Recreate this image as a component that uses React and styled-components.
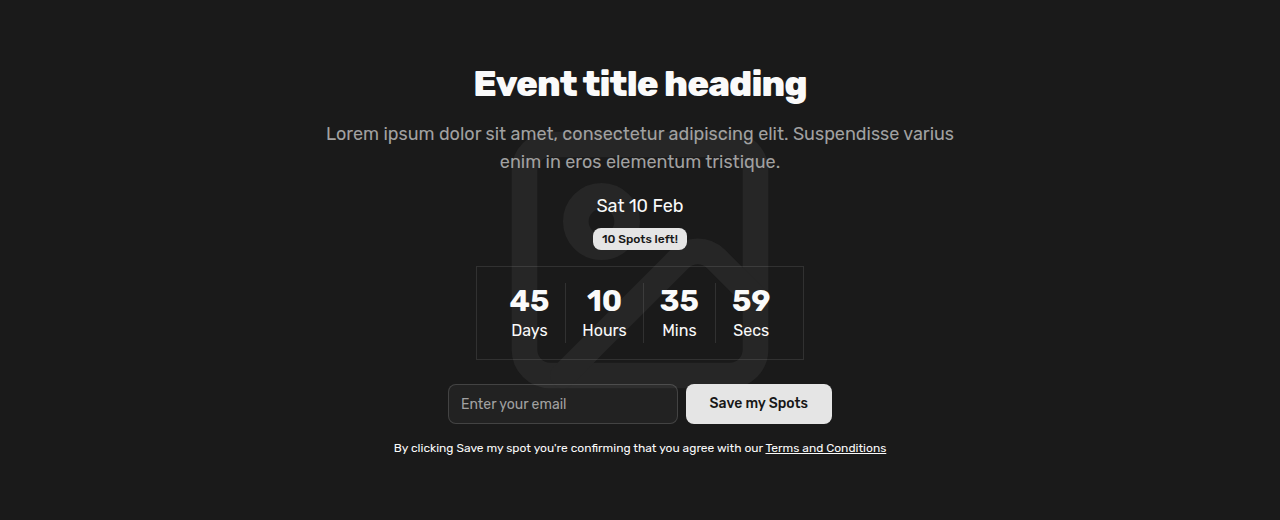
import React from "react";
import styled, { createGlobalStyle } from "styled-components";
import { Image } from "lucide-react";

const GlobalStyle = createGlobalStyle`
  *, *::before, *::after { box-sizing: border-box; }
  body {
    margin: 0;
    background: #1a1a1a;
    color: #fafafa;
    font-family: Rubik, Roboto, "Liberation Sans", sans-serif;
  }
  h1, p { margin: 0; }
`;

const Hero = styled.section`
  position: relative;
  min-height: 100vh;
  padding: 64px 24px;
  display: flex;
  flex-direction: column;
  align-items: center;
  justify-content: center;
  text-align: center;
  background: #1a1a1a;
`;

const Backdrop = styled.div`
  position: absolute;
  inset: 0;
  display: flex;
  align-items: center;
  justify-content: center;
  color: #262626;
  pointer-events: none;
`;

const Content = styled.div`
  position: relative;
  width: 100%;
  max-width: 672px;
  display: flex;
  flex-direction: column;
  align-items: center;
  gap: 16px;
`;

const Title = styled.h1`
  font-size: 36px;
  line-height: 40px;
  font-weight: 800;
  letter-spacing: -0.025em;
`;

const Lead = styled.p`
  color: #a1a1a1;
  font-size: 18px;
  line-height: 28px;
  max-width: 640px;
`;

const Schedule = styled.div`
  display: flex;
  flex-direction: column;
  align-items: center;
  gap: 8px;
`;

const EventDate = styled.time`
  font-size: 18px;
  line-height: 28px;
`;

const Badge = styled.span`
  padding: 3px 9px;
  border-radius: 8px;
  background: #e5e5e5;
  color: #171717;
  font-size: 12px;
  line-height: 16px;
  font-weight: 500;
`;

const Countdown = styled.div`
  display: flex;
  padding: 16px;
  border: 1px solid rgba(255, 255, 255, 0.1);
`;

const Unit = styled.div`
  display: flex;
  flex-direction: column;
  align-items: center;
  padding: 0 16px;

  & + & { border-left: 1px solid rgba(255, 255, 255, 0.1); }
`;

const Value = styled.span`
  font-size: 30px;
  line-height: 36px;
  font-weight: 700;
`;

const Label = styled.span`
  font-size: 16px;
  line-height: 24px;
`;

const SignUp = styled.form`
  width: 100%;
  max-width: 384px;
  margin-top: 8px;
  display: flex;
  gap: 8px;
`;

const EmailInput = styled.input`
  flex: 1;
  min-width: 0;
  height: 40px;
  padding: 0 12px;
  border: 1px solid rgba(255, 255, 255, 0.15);
  border-radius: 8px;
  background: rgba(255, 255, 255, 0.04);
  color: #fafafa;
  font-family: inherit;
  font-size: 14px;

  &::placeholder { color: #a1a1a1; opacity: 1; }
`;

const SubmitButton = styled.button`
  height: 40px;
  padding: 0 24px;
  border: 0;
  border-radius: 8px;
  background: #e5e5e5;
  color: #171717;
  font-family: inherit;
  font-size: 14px;
  line-height: 20px;
  font-weight: 500;
  white-space: nowrap;
  cursor: pointer;
`;

const Terms = styled.p`
  font-size: 12px;
  line-height: 16px;

  a { color: inherit; text-decoration: underline; }
`;

const countdown = [
  { value: 45, label: "Days" },
  { value: 10, label: "Hours" },
  { value: 35, label: "Mins" },
  { value: 59, label: "Secs" },
];

export default function App() {
  return (
    <>
      <GlobalStyle />
      <Hero>
        <Backdrop aria-hidden="true">
          <Image size={308} strokeWidth={2} />
        </Backdrop>
        <Content>
          <Title>Event title heading</Title>
          <Lead>
            Lorem ipsum dolor sit amet, consectetur adipiscing elit. Suspendisse varius
            enim in eros elementum tristique.
          </Lead>
          <Schedule>
            <EventDate dateTime="02-10">Sat 10 Feb</EventDate>
            <Badge>10 Spots left!</Badge>
          </Schedule>
          <Countdown>
            {countdown.map(({ value, label }) => (
              <Unit key={label}>
                <Value>{value}</Value>
                <Label>{label}</Label>
              </Unit>
            ))}
          </Countdown>
          <SignUp onSubmit={(event) => event.preventDefault()}>
            <EmailInput type="email" placeholder="Enter your email" aria-label="Email" />
            <SubmitButton type="submit">Save my Spots</SubmitButton>
          </SignUp>
          <Terms>
            By clicking Save my spot you're confirming that you agree with our{" "}
            <a href="#terms">Terms and Conditions</a>
          </Terms>
        </Content>
      </Hero>
    </>
  );
}
